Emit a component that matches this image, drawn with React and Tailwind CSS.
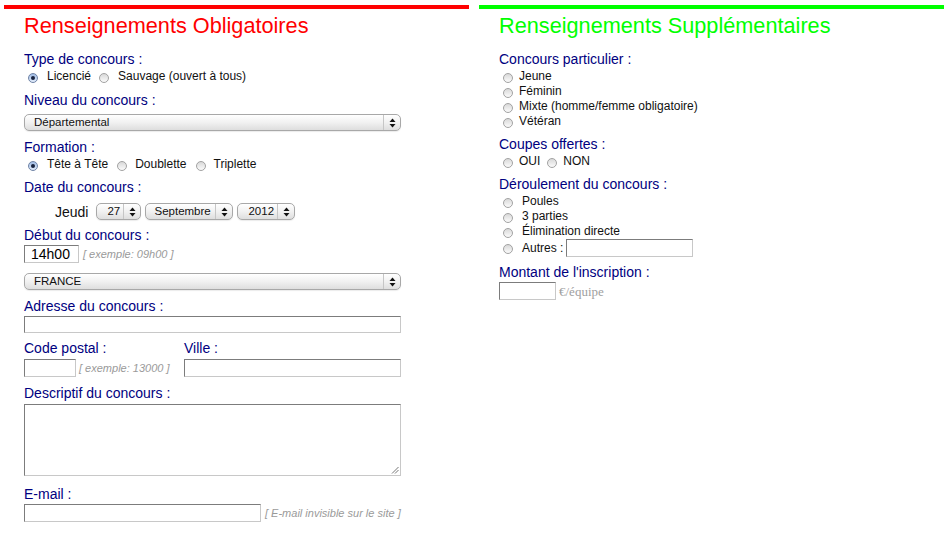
import React from "react";

function Label({ children, className = "" }) {
  return (
    <div className={`text-[14px] leading-[16px] text-[#000080] ${className}`}>
      {children}
    </div>
  );
}

function Radio({ checked = false, className = "" }) {
  return (
    <span
      className={`mt-[2px] inline-flex h-[10px] w-[10px] shrink-0 items-center justify-center rounded-full border ${
        checked
          ? "border-[#6f83a6] bg-linear-to-b from-[#9fbbe4] to-[#e3edfb]"
          : "border-[#a2a2a2] bg-linear-to-b from-[#d9d9d9] to-[#fbfbfb]"
      } ${className}`}
    >
      {checked && <span className="h-[4px] w-[4px] rounded-full bg-[#17233f]" />}
    </span>
  );
}

function Arrows() {
  return (
    <svg width="7" height="10" viewBox="0 0 7 10">
      <polygon points="3.5,0.5 6.5,4 0.5,4" fill="#111" />
      <polygon points="0.5,6 6.5,6 3.5,9.5" fill="#111" />
    </svg>
  );
}

function Select({ value, className = "", pad = "pl-[9px]" }) {
  return (
    <div
      className={`flex h-[17px] items-stretch rounded-[5px] border border-[#a8a8a8] bg-linear-to-b from-white via-[#f1f1f1] to-[#dedede] shadow-[0_1px_1px_rgba(0,0,0,0.08)] ${className}`}
    >
      <div className={`flex flex-1 items-center text-[11.5px] leading-none text-[#111] ${pad}`}>
        {value}
      </div>
      <div className="flex w-[17px] items-center justify-center border-l border-[#c6c6c6]">
        <Arrows />
      </div>
    </div>
  );
}

function Input({ className = "", children }) {
  return (
    <div
      className={`flex shrink-0 items-center border border-t-[#7c7c7c] border-l-[#7c7c7c] border-r-[#c8c8c8] border-b-[#c8c8c8] bg-white ${className}`}
    >
      {children}
    </div>
  );
}

function Hint({ children, className = "" }) {
  return (
    <span className={`text-[11px] italic leading-none text-[#9a9a9a] ${className}`}>
      {children}
    </span>
  );
}

function RadioRow({ children, className = "" }) {
  return (
    <div className={`flex h-[15px] items-center text-[12px] leading-[15px] text-[#111] ${className}`}>
      {children}
    </div>
  );
}

export default function App() {
  return (
    <div className="flex h-[539px] w-[949px] gap-[10px] bg-white pl-[4px] pt-[5px] font-['Liberation_Sans',Arial,sans-serif]">
      {/* Left column */}
      <div className="w-[465px]">
        <div className="h-[4px] bg-[#ff0000]" />
        <div className="flex flex-col pl-[20px]">
          <h1 className="mt-[4px] text-[21.7px] leading-[26px] text-[#ff0000]">
            Renseignements Obligatoires
          </h1>

          <Label className="mt-[12px]">Type de concours :</Label>
          <RadioRow className="mt-[2px]">
            <Radio checked className="ml-[4px]" />
            <span className="ml-[9px]">Licencié</span>
            <Radio className="ml-[8px]" />
            <span className="ml-[9px]">Sauvage (ouvert à tous)</span>
          </RadioRow>

          <Label className="mt-[8px]">Niveau du concours :</Label>
          <Select value="Départemental" className="mt-[6px] w-[377px]" />

          <Label className="mt-[8px]">Formation :</Label>
          <RadioRow className="mt-[2px]">
            <Radio checked className="ml-[4px]" />
            <span className="ml-[9px]">Tête à Tête</span>
            <Radio className="ml-[9px]" />
            <span className="ml-[8px]">Doublette</span>
            <Radio className="ml-[9px]" />
            <span className="ml-[8px]">Triplette</span>
          </RadioRow>

          <Label className="mt-[7px]">Date du concours :</Label>
          <div className="mt-[8px] flex h-[17px] items-center">
            <span className="ml-[31px] mr-[8px] text-[14px] leading-[16px] text-[#111]">Jeudi</span>
            <Select value="27" className="w-[45px]" pad="pl-[10px]" />
            <Select value="Septembre" className="ml-[4px] w-[88px]" pad="pl-[8px]" />
            <Select value="2012" className="ml-[4px] w-[58px]" pad="pl-[10px]" />
          </div>

          <Label className="mt-[7px]">Début du concours :</Label>
          <div className="mt-[2px] flex items-center">
            <Input className="h-[18px] w-[55px] pl-[6px] text-[14px] text-black">14h00</Input>
            <Hint className="ml-[4px]">[ exemple: 09h00 ]</Hint>
          </div>

          <Select value="FRANCE" className="mt-[10px] w-[377px]" />

          <Label className="mt-[8px]">Adresse du concours :</Label>
          <Input className="mt-[2px] h-[17px] w-[377px]" />

          <div className="mt-[7px] flex">
            <Label className="w-[160px]">Code postal :</Label>
            <Label>Ville :</Label>
          </div>
          <div className="mt-[3px] flex items-center">
            <div className="flex w-[160px] items-center">
              <Input className="h-[18px] w-[52px]" />
              <Hint className="ml-[3px]">[ exemple: 13000 ]</Hint>
            </div>
            <Input className="h-[18px] w-[217px]" />
          </div>

          <Label className="mt-[8px]">Descriptif du concours :</Label>
          <Input className="relative mt-[3px] h-[72px] w-[377px]">
            <svg className="absolute bottom-[1px] right-[1px]" width="8" height="8" viewBox="0 0 8 8">
              <line x1="1" y1="7.5" x2="7.5" y2="1" stroke="#777" strokeWidth="1" />
              <line x1="4" y1="7.5" x2="7.5" y2="4" stroke="#777" strokeWidth="1" />
            </svg>
          </Input>

          <Label className="mt-[10px]">E-mail :</Label>
          <div className="mt-[2px] flex items-center">
            <Input className="h-[18px] w-[237px]" />
            <Hint className="ml-[4px]">[ E-mail invisible sur le site ]</Hint>
          </div>
        </div>
      </div>

      {/* Right column */}
      <div className="w-[465px]">
        <div className="h-[4px] bg-[#00ff00]" />
        <div className="flex flex-col pl-[20px]">
          <h1 className="mt-[4px] text-[21.7px] leading-[26px] text-[#00ff00]">
            Renseignements Supplémentaires
          </h1>

          <Label className="mt-[12px]">Concours particulier :</Label>
          <div className="mt-[2px] flex flex-col">
            {["Jeune", "Féminin", "Mixte (homme/femme obligatoire)", "Vétéran"].map((t) => (
              <RadioRow key={t}>
                <Radio className="ml-[4px]" />
                <span className="ml-[6px]">{t}</span>
              </RadioRow>
            ))}
          </div>

          <Label className="mt-[7px]">Coupes offertes :</Label>
          <RadioRow className="mt-[2px]">
            <Radio className="ml-[4px]" />
            <span className="ml-[6px]">OUI</span>
            <Radio className="ml-[7px]" />
            <span className="ml-[6px]">NON</span>
          </RadioRow>

          <Label className="mt-[7px]">Déroulement du concours :</Label>
          <div className="mt-[2px] flex flex-col">
            {["Poules", "3 parties", "Élimination directe"].map((t) => (
              <RadioRow key={t}>
                <Radio className="ml-[4px]" />
                <span className="ml-[9px]">{t}</span>
              </RadioRow>
            ))}
            <div className="flex h-[18px] items-center text-[12px] leading-[15px] text-[#111]">
              <Radio className="ml-[4px]" />
              <span className="ml-[9px]">Autres :</span>
              <Input className="ml-[3px] h-[18px] w-[127px]" />
            </div>
          </div>

          <Label className="mt-[7px]">Montant de l'inscription :</Label>
          <div className="mt-[2px] flex items-center">
            <Input className="h-[18px] w-[57px]" />
            <span className="ml-[3px] font-['Liberation_Serif',serif] text-[13px] leading-none text-[#a0a0a0]">
              €/équipe
            </span>
          </div>
        </div>
      </div>
    </div>
  );
}
